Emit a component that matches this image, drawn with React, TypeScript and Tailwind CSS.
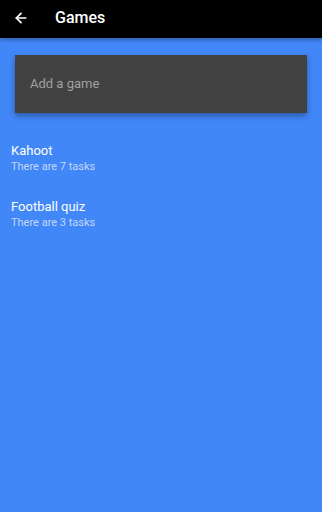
import { ArrowLeft } from "lucide-react";

const games = [
  { name: "Kahoot", tasks: 7 },
  { name: "Football quiz", tasks: 3 },
];

export default function App() {
  return (
    <div
      className="flex h-[512px] w-[322px] flex-col bg-[#4287f7]"
      style={{ fontFamily: "Roboto, 'Noto Sans', sans-serif" }}
    >
      <header className="flex h-[38px] shrink-0 items-center bg-black pb-[2px] shadow-[0_2px_4px_rgba(0,0,0,0.3)]">
        <ArrowLeft className="ml-[13px] h-[16px] w-[16px] text-white" strokeWidth={2.6} />
        <h1 className="ml-[26px] text-[16px] font-medium text-white">Games</h1>
      </header>

      <div className="px-[15px] pt-[17px]">
        <div className="flex h-[58px] items-center bg-[#424242] pl-[15px] shadow-[0_3px_6px_rgba(0,0,0,0.35)]">
          <span className="text-[13px] text-[#a0a0a0]">Add a game</span>
        </div>
      </div>

      <ul className="mt-[29px] flex flex-col gap-[24px] pl-[11px]">
        {games.map((g) => (
          <li key={g.name} className="flex flex-col">
            <span className="text-[13px] leading-[17px] text-white">{g.name}</span>
            <span className="text-[11px] leading-[15px] text-[#c2d8fb]">There are {g.tasks} tasks</span>
          </li>
        ))}
      </ul>
    </div>
  );
}
